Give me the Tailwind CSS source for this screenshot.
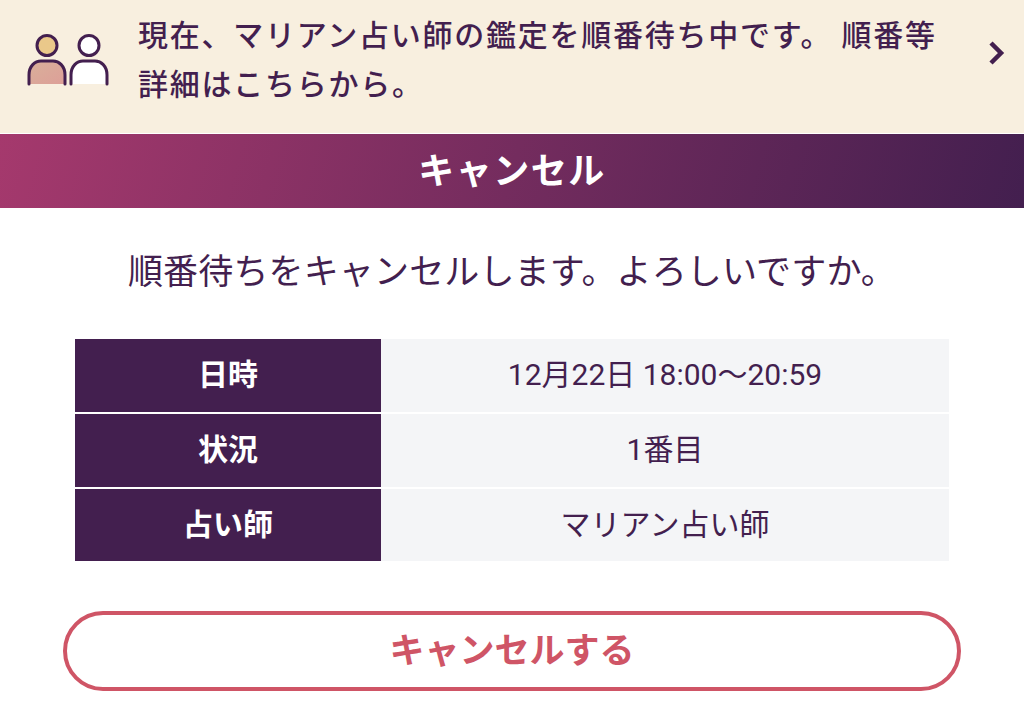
<!DOCTYPE html>
<html lang="ja">
<head>
<meta charset="UTF-8" />
<title>キャンセル</title>
<script src="https://cdn.jsdelivr.net/npm/@tailwindcss/browser@4"></script>
</head>
<body class="h-screen overflow-hidden bg-white font-['Roboto','Noto_Sans_CJK_JP',sans-serif] text-[#431f4f]">
	<div class="flex h-[133px] items-center bg-[#f8efdf] pb-[13px] pl-[26px] pr-[18px]">
		<svg class="h-[54px] w-[84px] shrink-0" viewBox="0 0 84 54" fill="none">
			<defs>
				<linearGradient id="body" x1="0" y1="0" x2="1" y2="1">
					<stop offset="0" stop-color="#d9b09a" />
					<stop offset="1" stop-color="#dd9f98" />
				</linearGradient>
			</defs>
			<circle cx="21" cy="12.500" r="10" fill="#eac88a" stroke="#431f4f" stroke-width="3" />
			<circle cx="63" cy="12.500" r="10" fill="#fff" stroke="#431f4f" stroke-width="3" />
			<path d="M3 51V42C3 33 9 28 15 28H27C33 28 39 33 39 42V51Z" fill="url(#body)" />
			<path d="M45 51V42C45 33 51 28 57 28H69C75 28 81 33 81 42V51Z" fill="#fff" />
			<path d="M3 51V42C3 33 9 28 15 28H27C33 28 39 33 39 42V51" stroke="#431f4f" stroke-width="3" stroke-linecap="round" />
			<path d="M45 51V42C45 33 51 28 57 28H69C75 28 81 33 81 42V51" stroke="#431f4f" stroke-width="3" stroke-linecap="round" />
		</svg>
		<p class="ml-[28px] text-[30px] leading-[49px] font-medium tracking-[1.750px]">現在、マリアン占い師の鑑定を順番待ち中です。 順番等<br />詳細はこちらから。</p>
		<svg class="ml-auto mb-[14px] h-[26px] w-[18px] shrink-0" viewBox="0 0 18 26" fill="none">
			<path d="M3 3L13 13L3 23" stroke="#431f4f" stroke-width="4.500" />
		</svg>
	</div>
	<h1 class="mt-px flex h-[74px] items-center justify-center bg-linear-[105deg] from-[#a5396d] to-[#431f4f] pt-[2px] text-[36px] font-bold tracking-[1.500px] text-white">キャンセル</h1>
	<p class="mt-[40px] text-center text-[35px] leading-[50px] tracking-[0.150px]">順番待ちをキャンセルします。よろしいですか。</p>
	<div class="mx-[75px] mt-[41px] flex flex-col gap-[2px]">
		<div class="flex h-[73px]">
			<div class="flex w-[306px] items-center justify-center bg-[#431f4f] pb-[2px] text-[30px] font-bold text-white">日時</div>
			<div class="flex flex-1 items-center justify-center bg-[#f4f5f7] pb-[2px] text-[30px]">12月22日 18:00〜20:59</div>
		</div>
		<div class="flex h-[73px]">
			<div class="flex w-[306px] items-center justify-center bg-[#431f4f] pb-[2px] text-[30px] font-bold text-white">状況</div>
			<div class="flex flex-1 items-center justify-center bg-[#f4f5f7] pb-[2px] text-[30px]">1番目</div>
		</div>
		<div class="flex h-[72px]">
			<div class="flex w-[306px] items-center justify-center bg-[#431f4f] pb-[2px] text-[30px] font-bold text-white">占い師</div>
			<div class="flex flex-1 items-center justify-center bg-[#f4f5f7] pb-[2px] text-[30px]">マリアン占い師</div>
		</div>
	</div>
	<button class="mx-[63px] mt-[50px] flex h-[80px] w-[898px] items-center justify-center rounded-full border-[4px] border-[#cf5566] bg-white pt-[2px] text-[35px] font-bold text-[#cf5566]">キャンセルする</button>
</body>
</html>
